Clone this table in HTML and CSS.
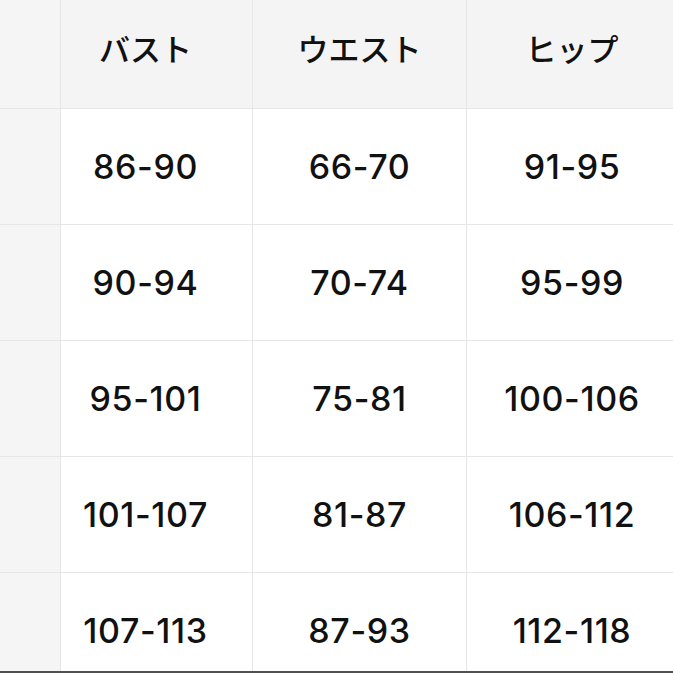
FILE: index.html
```html
<!DOCTYPE html>
<html lang="ja">
<head>
<meta charset="utf-8">
<link rel="stylesheet" href="styles.css">
</head>
<body>
<div class="frame">
  <div class="grid">
    <div class="cell side head"></div>
    <div class="cell head c2">バスト</div>
    <div class="cell head">ウエスト</div>
    <div class="cell head c4">ヒップ</div>

    <div class="cell side"></div>
    <div class="cell c2">86-90</div>
    <div class="cell">66-70</div>
    <div class="cell c4">91-95</div>

    <div class="cell side"></div>
    <div class="cell c2">90-94</div>
    <div class="cell">70-74</div>
    <div class="cell c4">95-99</div>

    <div class="cell side"></div>
    <div class="cell c2">95-101</div>
    <div class="cell">75-81</div>
    <div class="cell c4">100-106</div>

    <div class="cell side"></div>
    <div class="cell c2">101-107</div>
    <div class="cell">81-87</div>
    <div class="cell c4">106-112</div>

    <div class="cell side"></div>
    <div class="cell c2">107-113</div>
    <div class="cell">87-93</div>
    <div class="cell c4">112-118</div>
  </div>
</div>
</body>
</html>
```
FILE: styles.css
```css
html, body {
  margin: 0;
  padding: 0;
  background: #fff;
}
.frame {
  width: 673px;
  height: 673px;
  box-sizing: border-box;
  border-bottom: 2px solid #505050;
  overflow: hidden;
}
.grid {
  display: grid;
  grid-template-columns: 60px 191px 213px 206px;
  grid-template-rows: 108px repeat(5, 115px);
  gap: 1px;
  background: #e6e6e6;
  width: 673px;
}
.cell {
  background: #fff;
  display: flex;
  align-items: center;
  justify-content: center;
  font-family: Inter, "Noto Sans CJK JP", sans-serif;
  font-size: 34px;
  font-weight: 500;
  letter-spacing: 0.6px;
  color: #111;
}
.head {
  background: #f4f4f4;
  font-family: "Noto Sans CJK JP", sans-serif;
  font-size: 31px;
  font-weight: 500;
  letter-spacing: 0;
  padding-bottom: 14px;
  box-sizing: border-box;
}
.side {
  background: #f5f5f5;
}
.c2 {
  padding-right: 22px;
}
.c4 {
  padding-left: 4px;
}
```
